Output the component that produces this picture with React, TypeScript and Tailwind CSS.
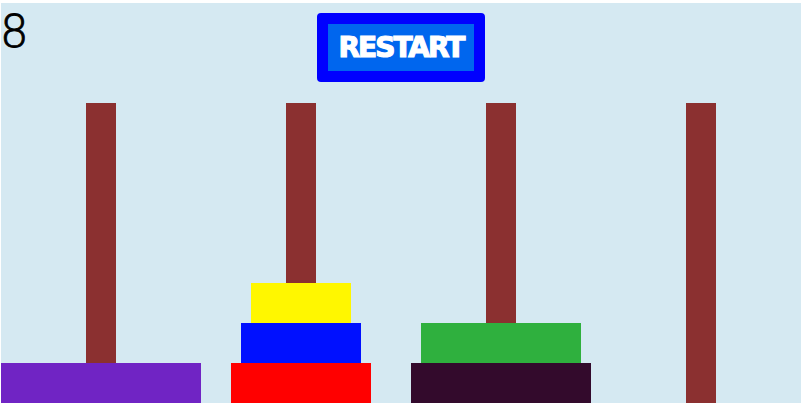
import React from "react";

type Disk = { w: number; color: string };

const columns: Disk[][] = [
  [{ w: 200, color: "bg-[#7024c4]" }],
  [
    { w: 100, color: "bg-[#fff700]" },
    { w: 120, color: "bg-[#0010ff]" },
    { w: 140, color: "bg-[#ff0000]" },
  ],
  [
    { w: 160, color: "bg-[#2fb03e]" },
    { w: 180, color: "bg-[#330a2c]" },
  ],
  [],
];

export default function App() {
  return (
    <div className="w-[804px] h-[403px] bg-white pt-[3px] pl-[1px] overflow-hidden">
      <div className="w-[800px] h-[400px] bg-[#d5e9f2] flex flex-col">
        <div className="h-[100px] grid grid-cols-[1fr_auto_1fr] items-start">
          <div
            className="text-[45px] leading-none mt-[6px] ml-[-1px] text-black [-webkit-text-stroke:0.9px_black]"
            style={{ fontFamily: '"DejaVu Sans", sans-serif', fontWeight: 200 }}
          >
            8
          </div>
          <div className="mt-[10px] w-[168px] h-[69px] border-[11px] border-[#0000ff] rounded-[4px] bg-[#0066ee] flex items-center justify-center">
            <span
              className="text-white font-bold text-[28px] leading-none tracking-[-2px] [-webkit-text-stroke:1.2px_white]"
              style={{ fontFamily: '"DejaVu Sans", sans-serif' }}
            >
              RESTART
            </span>
          </div>
          <div />
        </div>
        <div className="flex h-[300px]">
          {columns.map((disks, i) => (
            <div key={i} className="w-[200px] h-[300px] grid">
              <div className="col-start-1 row-start-1 justify-self-center w-[30px] h-full bg-[#8b3030]" />
              <div className="col-start-1 row-start-1 self-end flex flex-col items-center">
                {disks.map((d, j) => (
                  <div key={j} className={`h-[40px] ${d.color}`} style={{ width: d.w }} />
                ))}
              </div>
            </div>
          ))}
        </div>
      </div>
    </div>
  );
}
